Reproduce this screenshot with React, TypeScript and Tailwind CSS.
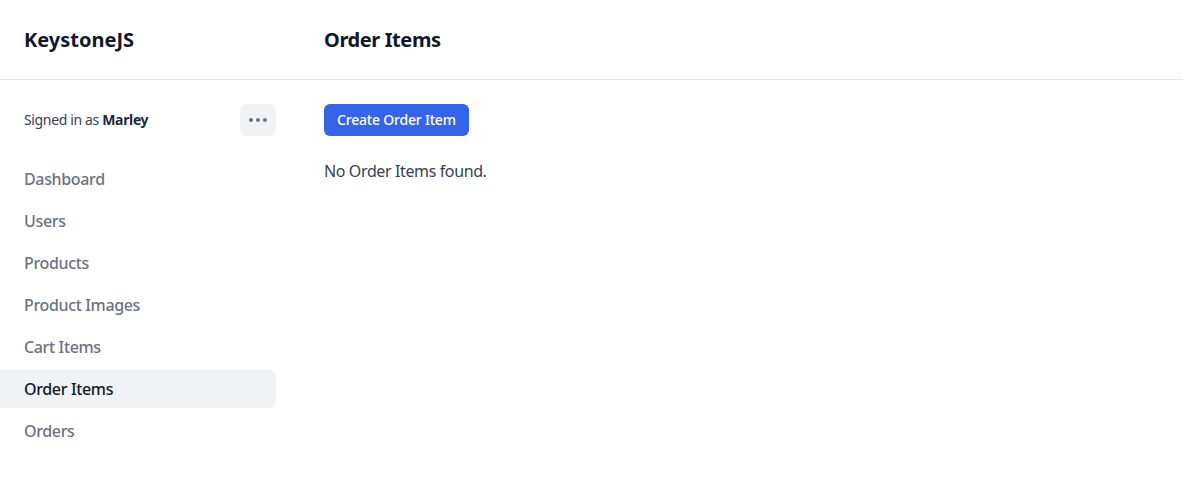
const navItems = [
  'Dashboard',
  'Users',
  'Products',
  'Product Images',
  'Cart Items',
  'Order Items',
  'Orders',
];

export default function App() {
  return (
    <div
      className="min-h-screen bg-white text-[#374151]"
      style={{ fontFamily: '"Noto Sans", "Open Sans", sans-serif' }}
    >
      <div className="flex h-[80px] border-b border-[#e1e5e9]">
        <div className="w-[300px] flex items-center px-6">
          <span className="text-[20px] font-bold text-[#111827]">KeystoneJS</span>
        </div>
        <div className="flex items-center px-6">
          <h1 className="text-[20px] font-bold text-[#111827] tracking-[-0.4px]">Order Items</h1>
        </div>
      </div>

      <div className="flex">
        <aside className="w-[300px] pr-6 pt-6">
          <div className="flex items-center justify-between pl-6 h-8">
            <span className="text-[14px] text-[#374151] tracking-[-0.35px] leading-none pb-[1px]">
              Signed in as <strong className="font-bold text-[#1f2937]">Marley</strong>
            </span>
            <button className="w-9 h-8 rounded-md bg-[#eff3f6] flex items-center justify-center gap-[3px]">
              <span className="w-1 h-1 rounded-full bg-[#6b7280]" />
              <span className="w-1 h-1 rounded-full bg-[#6b7280]" />
              <span className="w-1 h-1 rounded-full bg-[#6b7280]" />
            </button>
          </div>
          <nav className="mt-6 flex flex-col gap-1">
            {navItems.map((item) => {
              const active = item === 'Order Items';
              return (
                <div
                  key={item}
                  className={`h-[38px] flex items-center pl-6 rounded-r-md text-[16px] font-medium tracking-[-0.35px] ${
                    active ? 'bg-[#eff3f6] text-[#111827]' : 'text-[#6b7280]'
                  }`}
                >
                  {item}
                </div>
              );
            })}
          </nav>
        </aside>

        <main className="flex-1 px-6 pt-6">
          <button className="h-8 px-[13px] pb-[1px] rounded-md bg-[#3563e9] text-white text-[14px] font-medium tracking-[-0.2px]">
            Create Order Item
          </button>
          <p className="mt-[23px] text-[16px] text-[#374151] tracking-[-0.38px]">No Order Items found.</p>
        </main>
      </div>
    </div>
  );
}
